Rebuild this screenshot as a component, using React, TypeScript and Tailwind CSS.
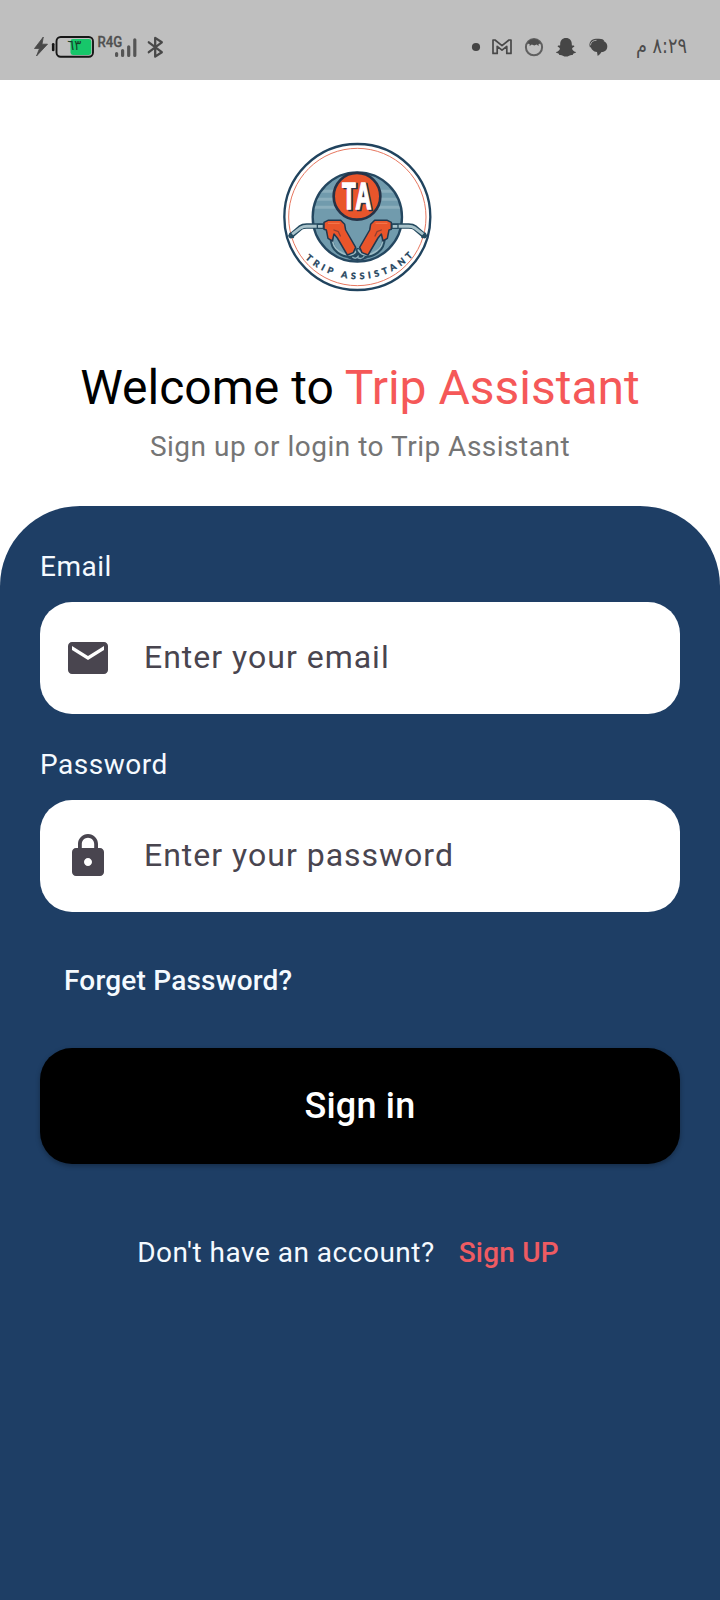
import type { ReactNode } from "react";

function StatusBar() {
  return (
    <header className="flex h-20 shrink-0 items-start justify-between bg-[#bfbfbf] pr-[10px] text-[#494949]">
      <svg className="h-20 w-[180px]" viewBox="0 0 180 80" fill="none" role="img" aria-label="Battery, signal and Bluetooth">
        <path d="M43.3 37 L34.5 48.5 H39.5 L36.5 56 L47.5 44.2 H42 Z" fill="#484848" stroke="#484848" strokeWidth="0.8" strokeLinejoin="round" />
        <path d="M53.2 44.2 V50" stroke="#161616" strokeWidth="2.6" strokeLinecap="round" />
        <rect x="56.5" y="37" width="36.5" height="19.8" rx="4.2" stroke="#161616" strokeWidth="1.9" />
        <rect x="70.5" y="39" width="20.8" height="16" rx="2.4" fill="#17c76a" />
        <text x="74.3" y="50" textAnchor="middle" direction="ltr" fontSize="14" fill="#163f29" fontFamily="'DejaVu Sans', sans-serif" textLength="14" lengthAdjust="spacingAndGlyphs">٦٣</text>
        <text x="97.5" y="46.9" fontSize="14.5" fontWeight="500" fill="#505050" stroke="#505050" strokeWidth="0.3" fontFamily="Roboto, sans-serif" textLength="24.8" lengthAdjust="spacingAndGlyphs">R4G</text>
        <path d="M116.6 53.6 V55.5 M122.6 50.6 V55.5 M128.7 46.8 V55.5 M134.8 39.8 V55.5" stroke="#555" strokeWidth="3.2" strokeLinecap="round" />
        <path d="M148.8 42.3 L161.8 52.2 L155.2 56.6 V37.9 L161.8 42.3 L148.8 52.2" stroke="#484848" strokeWidth="2.3" strokeLinejoin="round" strokeLinecap="round" />
      </svg>
      <svg className="h-20 w-[260px]" viewBox="450 0 260 80" fill="none" role="img" aria-label="Notifications and time">
        <circle cx="476" cy="47" r="4.1" fill="#444" />
        <path d="M493 53.4 V40 H495 L502 45.6 L509 40 H511 V53.4 H506.8 V46.4 L502 50.2 L497.2 46.4 V53.4 Z" stroke="#484848" strokeWidth="1.7" strokeLinejoin="round" />
        <circle cx="534" cy="47.2" r="8.1" stroke="#606060" strokeWidth="2" />
        <path d="M527.6 43.4 C529 37.8 539 37.8 540.4 43.4 L538.6 44 V46 L536.6 44.6 L534.3 45.4 L531.8 44.6 L529.6 46 V44 Z" fill="#4c4c4c" />
        <path d="M566 38 C562.3 38 560.1 40.5 560.2 44.3 L560.1 45.6 C559 45.2 557.6 45.3 557.6 46.2 C557.6 47.2 559.6 47.4 559.9 48.4 C560 50 557.6 51.7 555.9 52.1 C556 53.3 558.2 53.3 558.9 53.8 L559.3 55 C561.8 54.4 563.3 56.6 566 56.6 C568.7 56.6 570.2 54.4 572.7 55 L573.1 53.8 C573.8 53.3 576 53.3 576.1 52.1 C574.4 51.7 572 50 572.1 48.4 C572.4 47.4 574.4 47.2 574.4 46.2 C574.4 45.3 573 45.2 571.9 45.6 L571.8 44.3 C571.9 40.5 569.7 38 566 38 Z" fill="#464646" />
        <path d="M590 47.5 C588 43.2 591.3 38.8 596 38.8 H599 C602 38.8 603.5 39.6 604.2 41" fill="#484848" />
        <path d="M596.5 40.6 H600.5 C604.7 40.6 607.3 43 607.3 46.4 C607.3 50 604.2 52.1 601.5 52.1 C600 54.5 599 55.2 597.7 56 L597 52.1 C593.5 51.5 590.8 49.2 590.8 46.2 C590.8 43 593 40.6 596.5 40.6 Z" fill="#464646" />
        <path d="M590.4 45.3 C590.8 42 593.2 40.3 596.5 40.3" stroke="#bfbfbf" strokeWidth="0.8" />
        <text x="687" y="52.6" direction="rtl" textAnchor="start" fontSize="21" fill="#4b4b4b" fontFamily="'DejaVu Sans', sans-serif" textLength="51" lengthAdjust="spacingAndGlyphs">٨:٢٩ م</text>
      </svg>
    </header>
  );
}

function Nozzle() {
  return (
    <g strokeLinejoin="round" strokeLinecap="round">
      <path d="M63 317 L91 293 Q98 288 110 288 H158" stroke="#244a5f" strokeWidth="16" fill="none" />
      <path d="M65 314 L93 293 Q99 289 111 289 H156" stroke="#a9c3cb" strokeWidth="9" fill="none" />
      <path d="M61 311 L69 321" stroke="#244a5f" strokeWidth="7" />
      <path d="M142 283 H160 V295 H142 Z" fill="#a9c3cb" stroke="#244a5f" strokeWidth="4" />
      <path d="M184 318 Q184 352 204 366 Q226 382 246 378 Q259 374 264 360" stroke="#244a5f" strokeWidth="11" fill="none" />
      <path d="M186 320 Q187 349 206 363 Q225 377 244 374 Q256 371 261 360" stroke="#9bbbc5" strokeWidth="5" fill="none" />
      <path d="M162 277 L174 271 H212 L224 283 L227 300 L257 352 L250 368 L232 375 L202 324 L192 312 L187 333 L174 325 L169 300 L162 298 Z" fill="#e9552b" stroke="#20384f" strokeWidth="4.5" />
      <path d="M192 300 L205 305 L211 318" stroke="#903f32" strokeWidth="4" fill="none" />
      <path d="M175 280 H208" stroke="#f47b51" strokeWidth="3" />
    </g>
  );
}

function Logo() {
  return (
    <svg className="size-[175px]" viewBox="0 0 525 525" role="img" aria-label="Trip Assistant">
      <defs>
        <clipPath id="globe"><circle cx="262" cy="261" r="134" /></clipPath>
        <path id="name-arc" d="M104 384 A232 232 0 0 0 432 375" />
      </defs>
      <circle cx="262" cy="261" r="219" fill="#fff" stroke="#20435e" strokeWidth="7" />
      <circle cx="262" cy="261" r="206" fill="none" stroke="#e7775f" strokeWidth="3" />
      <circle cx="262" cy="261" r="134" fill="#719bad" />
      <g clipPath="url(#globe)" stroke="#8baebc" strokeWidth="9">
        <path d="M120 184 H400 M120 208 H400 M120 232 H400" />
      </g>
      <circle cx="262" cy="261" r="134" fill="none" stroke="#244760" strokeWidth="7" />
      <path d="M232 384 Q263 402 292 384 L263 360 Z" fill="#24445d" />
      <Nozzle />
      <g transform="translate(526 0) scale(-1 1)"><Nozzle /></g>
      <path d="M247 381 Q258 390 266 377 M263 383 Q275 390 283 378" stroke="#8eb0bd" strokeWidth="4" fill="none" />
      <circle cx="261" cy="199" r="70" fill="#e9552b" stroke="#263347" strokeWidth="8" />
      <g fontFamily="'Liberation Sans', sans-serif" fontWeight="700" fontSize="108">
        <text x="221" y="241" textLength="87" lengthAdjust="spacingAndGlyphs" className="[font-kerning:none]" fill="#263347" stroke="#263347" strokeWidth="7">TA</text>
        <text x="217" y="237" textLength="87" lengthAdjust="spacingAndGlyphs" className="[font-kerning:none]" fill="#fff" stroke="#fff" strokeWidth="5">TA</text>
      </g>
      <text fontFamily="Lato, sans-serif" fontWeight="900" fontSize="27" fill="#24445d" stroke="#24445d" strokeWidth="0.8">
        <textPath href="#name-arc" startOffset="2" textLength="358">TRIP ASSISTANT</textPath>
      </text>
    </svg>
  );
}

function Field({ label, hint, type, icon }: { label: string; hint: string; type: string; icon: ReactNode }) {
  return (
    <label className="flex flex-col gap-[15px]">
      <span className="pt-px text-[28px] leading-10 tracking-[0.5px] text-[#f5faff]">{label}</span>
      <span className="flex h-28 items-center rounded-[32px] bg-white px-6">
        <svg className="size-12 shrink-0" viewBox="0 0 24 24" fill="#49454f" aria-hidden="true">{icon}</svg>
        <input
          type={type}
          placeholder={hint}
          className="mb-0.5 ml-8 h-12 min-w-0 flex-1 bg-transparent text-[32px] leading-12 tracking-[1px] text-[#49454f] outline-none placeholder:text-[#49454f] placeholder:opacity-100"
        />
      </span>
    </label>
  );
}

export default function App() {
  return (
    <div className="flex min-h-[1600px] w-[720px] flex-col overflow-hidden bg-white font-['Roboto',sans-serif]">
      <StatusBar />
      <section className="flex h-[426px] shrink-0 flex-col items-center pt-[50px]">
        <div className="mr-[5px]"><Logo /></div>
        <h1 className="mt-12 whitespace-nowrap text-[48px] leading-[69px] text-black">
          Welcome to <span className="text-[#f55858]">Trip Assistant</span>
        </h1>
        <p className="mt-[5px] text-[28px] leading-10 tracking-[0.5px] text-[#757575]">Sign up or login to Trip Assistant</p>
      </section>
      <main className="flex flex-1 flex-col rounded-t-[80px] bg-[#1e3e65] px-10 pt-10">
        <form className="flex flex-col" onSubmit={(e) => e.preventDefault()}>
          <div className="flex flex-col gap-[30px]">
            <Field
              label="Email"
              hint="Enter your email"
              type="email"
              icon={<path d="M20 4H4c-1.1 0-1.99.9-1.99 2L2 18c0 1.1.9 2 2 2h16c1.1 0 2-.9 2-2V6c0-1.1-.9-2-2-2zm0 4l-8 5-8-5V6l8 5 8-5v2z" />}
            />
            <Field
              label="Password"
              hint="Enter your password"
              type="password"
              icon={<path d="M18 8h-1V6c0-2.76-2.24-5-5-5S7 3.24 7 6v2H6c-1.1 0-2 .9-2 2v10c0 1.1.9 2 2 2h12c1.1 0 2-.9 2-2V10c0-1.1-.9-2-2-2zm-6 9c-1.1 0-2-.9-2-2s.9-2 2-2 2 .9 2 2-.9 2-2 2zm3.1-9H8.9V6c0-1.71 1.39-3.1 3.1-3.1 1.71 0 3.1 1.39 3.1 3.1v2z" />}
            />
          </div>
          <button type="button" className="my-5 h-24 self-start px-6 pt-0.5 text-[28px] font-medium leading-10 tracking-[0.2px] text-[#f5faff]">
            Forget Password?
          </button>
          <button type="submit" className="h-[116px] rounded-[32px] bg-black text-[36px] font-medium tracking-[0.2px] text-white shadow-[0_2px_5px_rgba(0,0,0,0.3)]">
            Sign in
          </button>
        </form>
        <div className="mt-10 flex h-24 items-center justify-center pt-0.5 text-[28px] leading-10">
          <span className="tracking-[0.5px] text-[#f5faff]">Don't have an account?</span>
          <button type="button" className="px-6 font-medium tracking-[0.2px] text-[#ee5b62]">Sign UP</button>
        </div>
      </main>
    </div>
  );
}
